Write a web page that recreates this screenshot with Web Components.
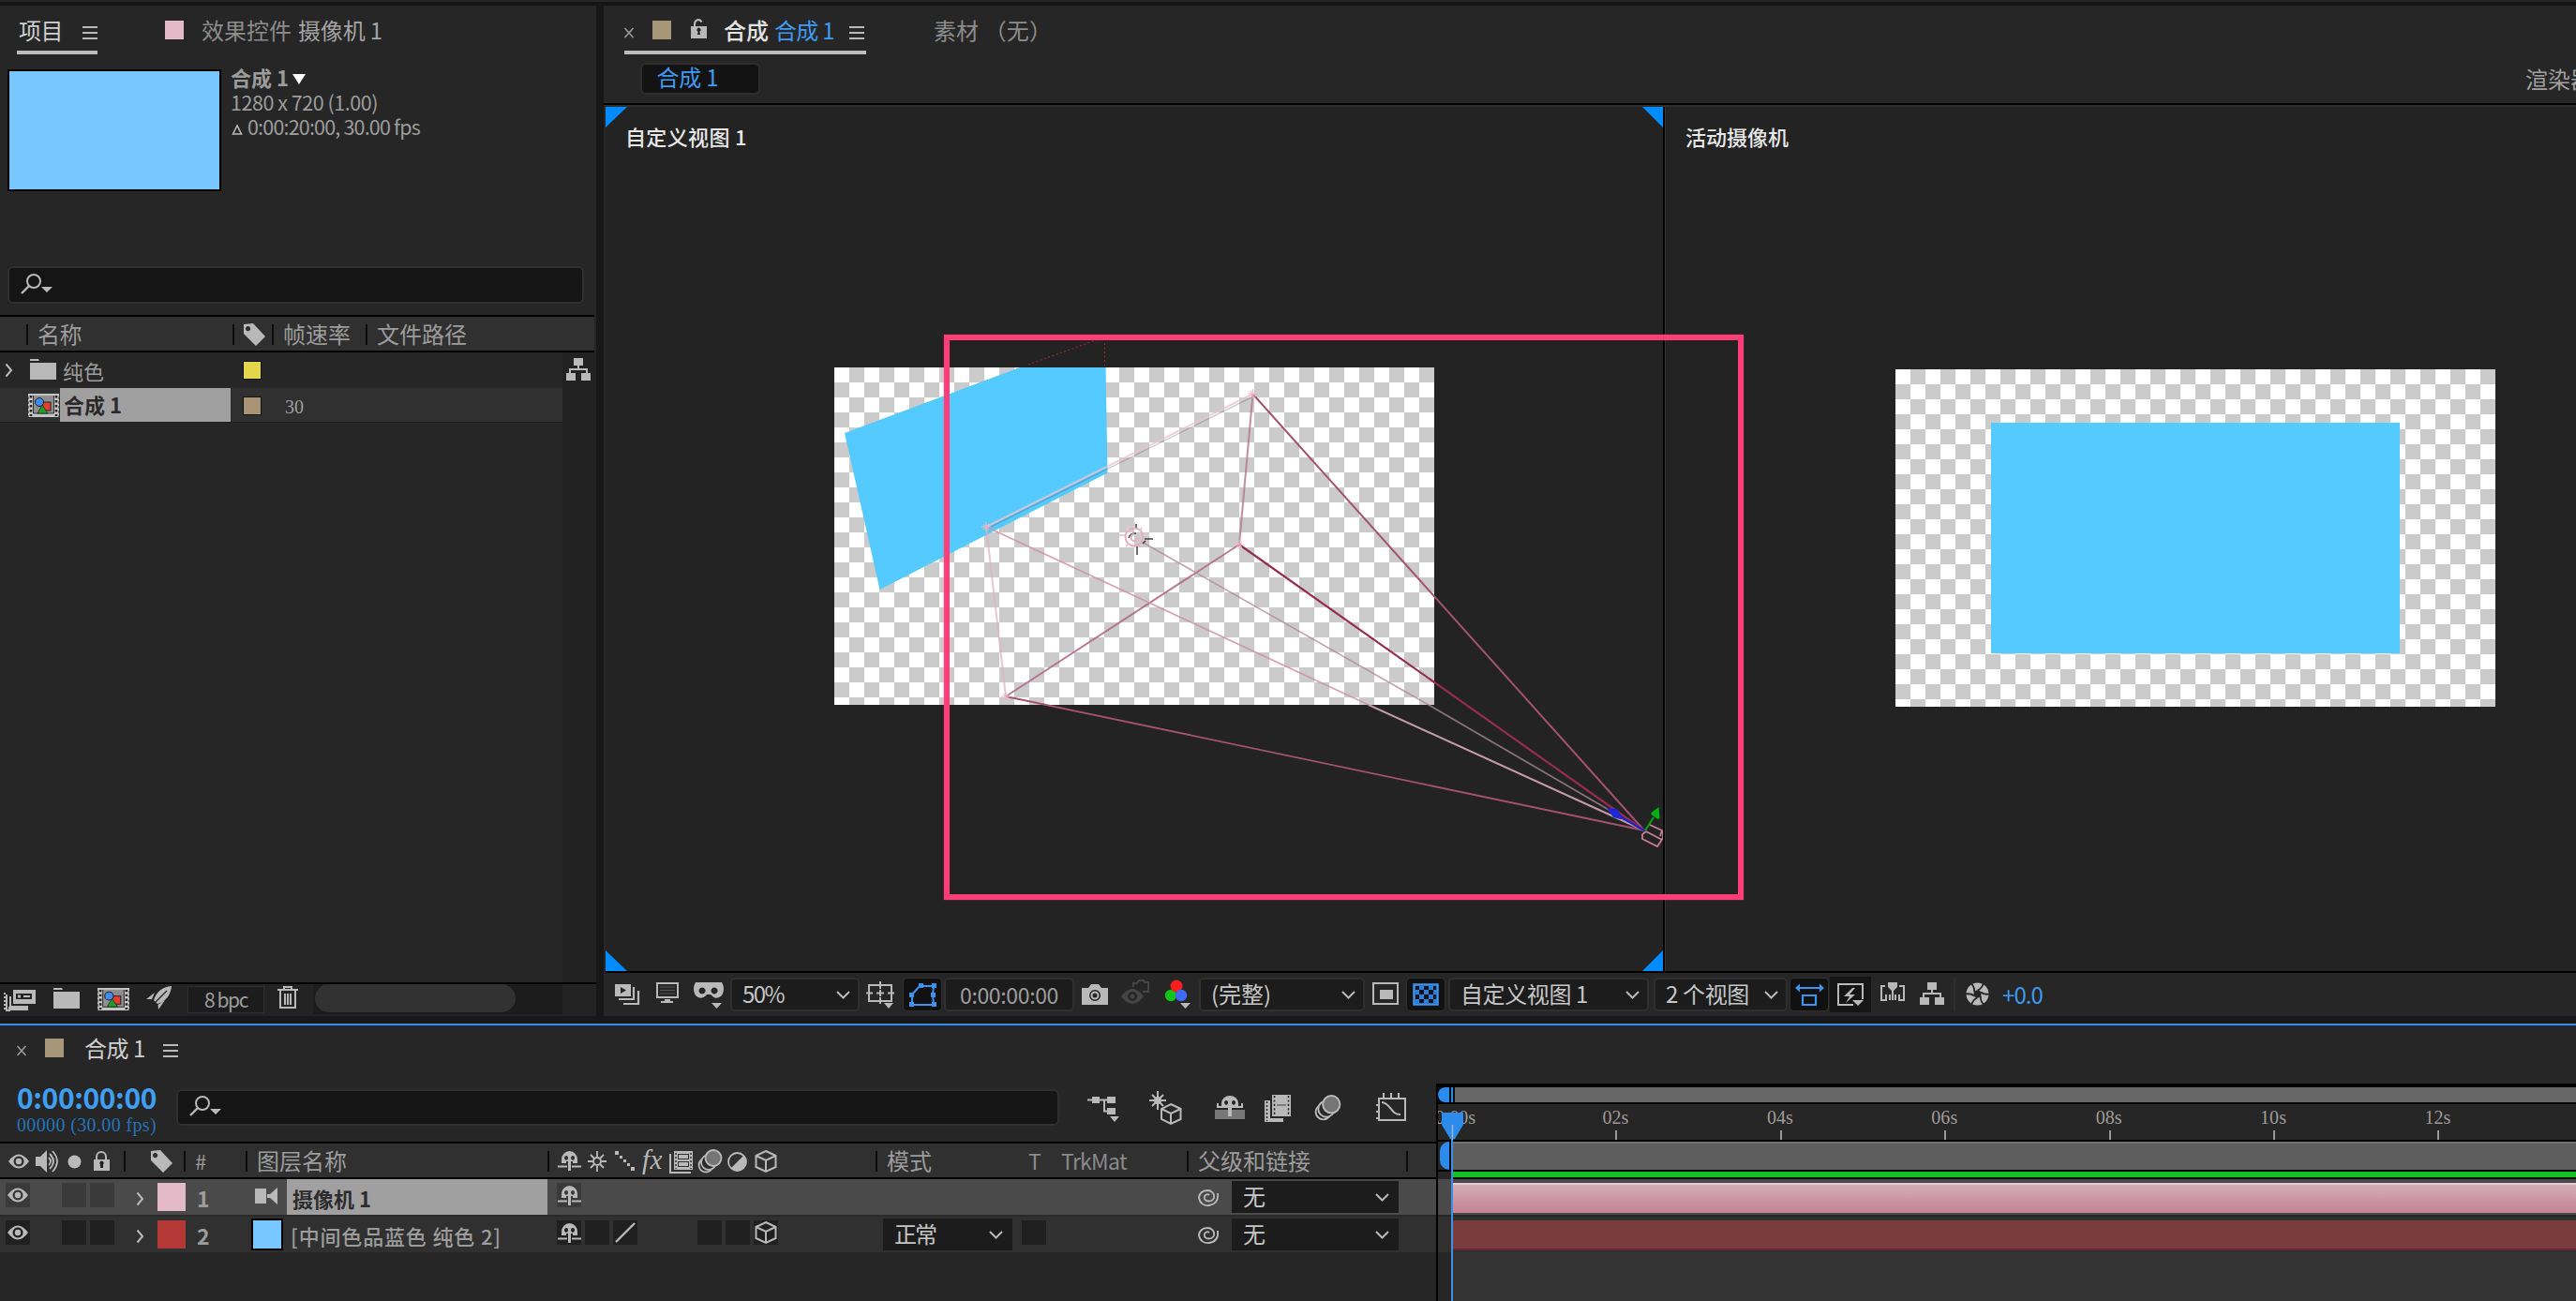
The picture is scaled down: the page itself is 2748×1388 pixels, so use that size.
<!DOCTYPE html>
<html lang="zh-CN">
<head>
<meta charset="utf-8">
<title>合成 1</title>
<style>
html,body{margin:0;padding:0;background:#262626}
body{width:2748px;height:1388px;overflow:hidden;font-family:"Noto Sans CJK SC","Noto Sans",sans-serif;color:#9c9c9c}
</style>
</head>
<body>
<ae-app></ae-app>
<script>
const ICONS = {
  menu: [16,14,'<path d="M0 1h16M0 7h16M0 13h16" stroke="currentColor" stroke-width="2"/>'],
  close: [12,12,'<path d="M1.500 1l9 10M10.500 1l-9 10" stroke="#9a9a9a" stroke-width="1.600"/>'],
  unlock: [17,21,'<path d="M4 9V5.500a4 4.500 0 0 1 7.500-2" fill="none" stroke="currentColor" stroke-width="2"/><path d="M0 8h17v13H0z" fill="currentColor"/><path d="M7 17l.6-3.500a2 2 0 1 1 1.800 0L10 17z" fill="#222"/>'],
  lock: [18,22,'<path d="M4 10V6a5 5 0 0 1 10 0v4" fill="none" stroke="currentColor" stroke-width="2"/><path d="M1 9h17v12H1z" fill="currentColor"/><path d="M8 18v-3.500a2.200 2.200 0 1 1 3 0V18z" fill="#222"/>'],
  search: [34,22,'<circle cx="14" cy="8" r="7" fill="none" stroke="currentColor" stroke-width="2"/><path d="M9 13l-8 8" stroke="currentColor" stroke-width="2.400"/><path d="M22 14h12l-6 6z" fill="currentColor"/>'],
  tag: [24,24,'<path fill-rule="evenodd" d="M1 1l10-1 13 14-10 10L1 11zM5.500 3a2.600 2.600 0 1 0 .1 0z" fill="currentColor"/>'],
  folder: [28,22,'<path d="M0 0h9l1 2H0zM0 4h28v18H0z" fill="currentColor"/>'],
  flow: [26,24,'<path d="M8 0h10v8H8zM0 16h10v8H0zM16 16h10v8H16z" fill="currentColor"/><path d="M13 8v5M4 17v-5h18v5" fill="none" stroke="currentColor" stroke-width="2"/>'],
  arrow: [9,16,'<path d="M1.500 1.500L7 8l-5.500 6.500" fill="none" stroke="currentColor" stroke-width="2"/>'],
  chev: [15,9,'<path d="M1 1l6.500 6.500L14 1" fill="none" stroke="currentColor" stroke-width="2"/>'],
  comp: [33,25,'<path d="M0 0h33v25H0z" fill="#c4c4c4"/><path d="M5 2h23v19H5z" fill="#8f8f8f"/><path d="M5.500 2v19h22V2" fill="none" stroke="#333" stroke-width="1"/><path d="M3 2v22M30 2v22" stroke="#222" stroke-width="2.500" stroke-dasharray="2.500 2.500"/><path d="M0 3v22M33 3v22" stroke="#262626" stroke-dasharray="3 2"/><rect x="15" y="9" width="9" height="9" fill="#e83b32" stroke="#222"/><circle cx="12" cy="9" r="4.500" fill="#3d8df0" stroke="#222"/><path d="M10 21l5-9 6 9z" fill="#1fa028" stroke="#222" stroke-width=".8"/>'],
  footage: [34,25,'<path fill-rule="evenodd" d="M10 1h24v15H10zM13 5v6h17V5z" fill="currentColor"/><path d="M15 6.500h3v3h-3zM21 7h7v2h-7z" fill="currentColor"/><path d="M3 6v17h3v-3h20M1 4v20" fill="none" stroke="currentColor" stroke-width="2"/><path d="M6 8h2v10h18v5H6z" fill="currentColor"/><path d="M1 6v19M9 24h17" stroke="#232323" stroke-width="2" stroke-dasharray="2 2"/>'],
  rocket: [27,25,'<path d="M27 0C17 1 11 6 8 15l4 4C21 16 26 10 27 0zM9 7L0 14h6zM20 15l-7 10-.5-5z" fill="currentColor"/><path d="M10 17L22 5" stroke="#222" stroke-width="1.200"/>'],
  trash: [22,24,'<path d="M0 4h22M7 4V1h8v3M3 5v18h16V5M8 8v12M11 8v12M14 8v12" fill="none" stroke="currentColor" stroke-width="2"/>'],
  eye: [22,16,'<path fill-rule="evenodd" d="M0 8Q11-7 22 8 11 23 0 8zM11 2.500a5.500 5.500 0 1 0 .1 0z" fill="currentColor"/><circle cx="11" cy="8" r="3.200" fill="currentColor"/>'],
  speaker: [25,24,'<path d="M0 7h5l7-7v24l-7-7H0z" fill="currentColor"/><path d="M14 8q4 4 0 8M15 4q8 8 0 16M18 1q10 11 0 22" fill="none" stroke="currentColor" stroke-width="1.800"/>'],
  dot: [15,15,'<circle cx="7.500" cy="7.500" r="7" fill="currentColor"/>'],
  shy: [25,21,'<path fill-rule="evenodd" d="M4 13V9a8.500 9 0 0 1 17 0v4h-5v-2h-2v10h-3V11H9v2zM9 5a2 2.400 0 1 0 .1 0zM16 5a2 2.400 0 1 0 .1 0z" fill="currentColor"/><path d="M0 16.500h10M15 16.500h10" stroke="currentColor" stroke-width="2"/>'],
  sun: [20,22,'<circle cx="10" cy="11" r="4" fill="none" stroke="currentColor" stroke-width="2"/><path d="M10 0v6M10 16v6M0 11h5M15 11h5M3 4l4 4M13 14l4 4M17 4l-4 4M7 14l-4 4" stroke="currentColor" stroke-width="1.800"/>'],
  steps: [22,21,'<path d="M0 0h4v4H0zM5 5h3v3H5zM9 9h3v3H9zM13 13h3v3h-3zM17 17h4v4h-4z" fill="currentColor"/>'],
  film: [25,24,'<path fill-rule="evenodd" d="M5 0h20v20H5zM9 3v6h12V3zM9 11v6h12v-6z" fill="currentColor"/><path d="M10 4h10v4H10zM10 12h10v4H10z" fill="currentColor"/><path d="M7 2v17M23 2v17" stroke="#2a2a2a" stroke-width="1.400" stroke-dasharray="2 2"/><path d="M1 3v20h22" fill="none" stroke="currentColor" stroke-width="2"/>'],
  mblur: [27,26,'<circle cx="9" cy="17" r="7.500" fill="none" stroke="currentColor" stroke-width="1.800"/><circle cx="12" cy="14" r="8" fill="#2a2a2a" stroke="currentColor" stroke-width="1.800"/><circle cx="17" cy="9.500" r="8.500" fill="#757575" stroke="currentColor" stroke-width="1.800"/>'],
  half: [21,21,'<circle cx="10.500" cy="10.500" r="9.500" fill="none" stroke="currentColor" stroke-width="1.800"/><path d="M17.500 3.500A9.900 9.900 0 0 1 3.500 17.500z" fill="currentColor"/>'],
  cube: [24,24,'<path d="M12 1l10.500 5v12L12 23 1.500 18V6zM1.500 6L12 11l10.500-5M12 11v12" fill="none" stroke="currentColor" stroke-width="2"/>'],
  slash: [24,24,'<path d="M2 22L22 2" stroke="currentColor" stroke-width="2.400"/>'],
  cam: [24,18,'<path d="M0 1h12v16H0zM12 7h4l8-7v18l-8-7h-4z" fill="currentColor"/><path d="M12.500 1v16" stroke="#4a4a4a"/>'],
  spiral: [24,22,'<path d="M13 9c-2-2-6 0-5 4 1 3 8 4 10-1 1-5-3-8-7-8-6 0-9 4-9 8 1 6 6 9 11 8 6-1 10-5 9-13" fill="none" stroke="currentColor" stroke-width="1.800"/>'],
  play: [27,22,'<path fill-rule="evenodd" d="M0 0h17v13H0zM6 3v7l6-3.500z" fill="currentColor"/><path d="M20 3v13H4M25 7v14H9" fill="none" stroke="currentColor" stroke-width="2.200"/>'],
  monitor: [24,22,'<path d="M1 1h22v15H1z" fill="none" stroke="currentColor" stroke-width="2"/><path d="M4 5h16M4 8.500h16M4 12h16" stroke="#555"/><path d="M9 18h6v2h3v2H5v-2h4z" fill="currentColor"/>'],
  goggles: [32,28,'<path fill-rule="evenodd" d="M2 0h28q4 7 0 14-6 6-12-1h-4Q8 20 2 14-2 7 2 0zM9 5.500a3.500 3.500 0 1 0 .1 0zM22 5.500a3.500 3.500 0 1 0 .1 0z" fill="currentColor"/><path d="M19 22h11l-5.500 6z" fill="currentColor"/>'],
  grid: [30,30,'<path d="M3 4h24v17H3z" fill="none" stroke="currentColor" stroke-width="2"/><path d="M15 0v8M15 17v7M0 12.500h7M23 12.500h7M11 12.500h8M15 9v7" stroke="currentColor" stroke-width="2"/><path d="M19 23h10l-5 6z" fill="currentColor"/>'],
  mask: [29,25,'<path d="M3 23V12L11 3h15l-1 9 1 11z" fill="none" stroke="#3d94f0" stroke-width="2"/><path d="M0 20h5v5H0zM0 10h5v5H0zM10 0h5v5h-5zM24 0h5v5h-5zM23 10h5v5h-5zM24 20h5v5h-5z" fill="#3d94f0"/>'],
  camera: [28,22,'<path fill-rule="evenodd" d="M0 4h7l3-4h8l3 4h7v18H0zM14 6a6 6 0 1 0 .1 0z" fill="currentColor"/><circle cx="14" cy="12" r="3.500" fill="none" stroke="currentColor" stroke-width="2"/>'],
  snap: [30,27,'<g color="#454545"><path fill-rule="evenodd" d="M0 18Q12 2 24 18 12 34 0 18zM12 13a5 5 0 1 0 .1 0z" fill="currentColor"/><circle cx="12" cy="18" r="2.500" fill="currentColor"/><path d="M13 8V4h4l2-3h5l1 2h4v10h-6" fill="none" stroke="currentColor" stroke-width="2"/></g>'],
  rgb: [27,31,'<circle cx="6" cy="17" r="6.200" fill="#14c41c"/><circle cx="12" cy="7" r="6.500" fill="#fa1e1e"/><circle cx="17" cy="17" r="6.200" fill="#3f6cf5"/><path d="M16 25h11l-5.500 6z" fill="currentColor"/>'],
  region: [28,24,'<path d="M1 1h26v22H1z" fill="none" stroke="currentColor" stroke-width="2"/><path d="M8 8h14v10H8z" fill="currentColor"/>'],
  alpha: [28,24,'<path d="M1.500 1.500h25v21h-25z" fill="#0b1420" stroke="#3d94f0" stroke-width="2.500"/><path d="M7 3h5v4H7zM17 3h5v4h-5zM3 7h4v5H3zM12 7h5v5h-5zM22 7h4v5h-4zM7 12h5v5H7zM17 12h5v5h-5zM3 17h4v4H3zM12 17h5v4h-5zM22 17h4v4h-4z" fill="#2f7fd6"/>'],
  fit: [31,24,'<path d="M4 5h23" stroke="#3d94f0" stroke-width="2"/><path d="M0 5l5-4.500v9zM31 5l-5-4.500v9z" fill="#3d94f0"/><path d="M8 13h14v10H8z" fill="none" stroke="#3d94f0" stroke-width="2.200"/>'],
  fast: [28,25,'<path d="M17 23H1V1h26v16" fill="none" stroke="currentColor" stroke-width="2"/><path d="M16 5L7 14h6l-4 7 10-9h-6l6-7zM16 18h12l-6 6z" fill="currentColor"/>'],
  tl: [26,21,'<path d="M5 4H1v15h5v-6M20 4h5v15h-5v-6M10 19v-6M16 19v-6" fill="none" stroke="currentColor" stroke-width="2"/><path d="M8 0h10v5l-4 4v10h-2V9L8 5z" fill="currentColor"/>'],
  aperture: [25,25,'<circle cx="12.500" cy="12.500" r="12" fill="currentColor"/><g fill="none" stroke="#262626" stroke-width="1.800"><path id="b" d="M12.500 8.500Q17 7 19 1"/><path d="M12.500 8.500Q17 7 19 1" transform="rotate(60 12.500 12.500)"/><path d="M12.500 8.500Q17 7 19 1" transform="rotate(120 12.500 12.500)"/><path d="M12.500 8.500Q17 7 19 1" transform="rotate(180 12.500 12.500)"/><path d="M12.500 8.500Q17 7 19 1" transform="rotate(240 12.500 12.500)"/><path d="M12.500 8.500Q17 7 19 1" transform="rotate(300 12.500 12.500)"/></g><circle cx="12.500" cy="12.500" r="4" fill="#262626"/>'],
  miniflow: [34,27,'<path d="M5 0h8v7H5zM21 0h9v7h-9zM21 12h9v7h-9zM24 21h10l-5 6z" fill="currentColor"/><path d="M0 3.500h23M18 3.500v12h4" fill="none" stroke="currentColor" stroke-width="2"/>'],
  draft: [35,36,'<path d="M9 0v20M0 10h18M3 4l12 12M15 4L3 16" stroke="currentColor" stroke-width="2"/><circle cx="9" cy="10" r="4" fill="currentColor"/><path d="M23 14l10.500 5v11L23 35l-10-5V19zM13 19l10 5 10.500-5M23 24v11" fill="#262626" stroke="currentColor" stroke-width="2"/>'],
  shybig: [32,26,'<path d="M0 15h32v10H0z" fill="#777"/><path fill-rule="evenodd" d="M7 11V8a9 8 0 0 1 18 0v3h5v2h-12v9h-4v-9H2v-2zM12 5a2 2.400 0 1 0 .1 0zM20 5a2 2.400 0 1 0 .1 0z" fill="currentColor"/><path d="M3 8v4M29 8v4" stroke="currentColor" stroke-width="2"/>'],
  filmbig: [30,29,'<path d="M8 0h20v23H8z" fill="currentColor"/><path d="M10.500 1v21M25.500 1v21" stroke="#2a2a2a" stroke-width="1.600" stroke-dasharray="2.200 2.200"/><path d="M13 11h10" stroke="#555" stroke-width="1.200"/><path d="M0 6h6v19h14v4H0z" fill="currentColor"/><path d="M2.500 7v21" stroke="#2a2a2a" stroke-width="1.500" stroke-dasharray="2 2"/>'],
  graph: [32,31,'<path d="M3 6h28v23H3z" fill="none" stroke="currentColor" stroke-width="2"/><path d="M8 0v6M16 0v6M24 0v6M0 13h3M0 20h3M0 27h3" stroke="currentColor" stroke-width="2"/><path d="M6 10c10 1 9 13 20 13" fill="none" stroke="currentColor" stroke-width="2"/>'],
  tri: [14,11,'<path d="M0 0h14L7 11z" fill="#fff"/>'],
  delta: [12,12,'<path d="M1.500 11L6 2l4.500 9z" fill="none" stroke="currentColor" stroke-width="1.600"/>'],
  head: [23,29,'<path d="M0 0h23v13l-9 15h-5L0 13z" fill="#2d8ceb"/><path d="M11.500 13v16" stroke="#9db4cc" stroke-width="1.500"/>'],
};

class AeIcon extends HTMLElement {
  connectedCallback() {
    const [w, h, body] = ICONS[this.getAttribute('name')];
    const W = this.getAttribute('w') || w, H = this.getAttribute('h') || h;
    this.attachShadow({mode:'open'}).innerHTML =
      `<style>:host{display:block;color:#b9b9b9;flex:none}svg{display:block;overflow:visible}</style>
       <svg width="${W}" height="${H}" viewBox="0 0 ${w} ${h}" preserveAspectRatio="none">${body}</svg>`;
  }
}
customElements.define('ae-icon', AeIcon);

/* One line of text; "fit" spreads its letters over a given width. */
class AeText extends HTMLElement {
  connectedCallback() {
    const a = n => this.getAttribute(n);
    const fam = a('serif') !== null ? '"Liberation Serif",serif' : '"Noto Sans CJK SC","Noto Sans",sans-serif';
    const lh = a('lh') || 30;
    this.attachShadow({mode:'open'}).innerHTML =
      `<style>:host{display:block;height:${lh}px;flex:none}
       span{display:inline-block;white-space:pre;font:${a('italic')!==null?'italic ':''}${a('weight')||400} ${a('size')||24}px/${lh}px ${fam};color:${a('color')||'#9c9c9c'}}</style><span><slot></slot></span>`;
    const fit = parseFloat(a('fit'));
    if (fit) {
      const s = this.shadowRoot.querySelector('span');
      const w = s.getBoundingClientRect().width, n = this.textContent.length;
      if (w) s.style.letterSpacing = ((fit - w) / n).toFixed(3) + 'px';
    }
  }
}
customElements.define('ae-text', AeText);

class AeBox extends HTMLElement {
  connectedCallback() {
    this.attachShadow({mode:'open'}).innerHTML =
      `<style>:host{display:flex;align-items:center;justify-content:center;box-sizing:border-box;width:100%;height:100%;
       background:${this.getAttribute('bg')||'#202020'};border:${this.getAttribute('border')||'0'};border-radius:${this.getAttribute('r')||0}px}</style><slot></slot>`;
  }
}
customElements.define('ae-box', AeBox);

class AeSelect extends HTMLElement {
  connectedCallback() {
    this.attachShadow({mode:'open'}).innerHTML =
      `<style>:host{display:flex;align-items:center;justify-content:space-between;box-sizing:border-box;width:100%;height:100%;
       padding:0 8px 0 ${this.getAttribute('pad')||10}px;background:#1c1c1c;border:2px solid #2f2f2f;border-radius:${this.getAttribute('r')||5}px}
       ::slotted(*){margin-top:-2px}
       :host([flat]){border-color:#1c1c1c;border-radius:0}</style><slot></slot><ae-icon name="chev"></ae-icon>`;
  }
}
customElements.define('ae-select', AeSelect);

/* Flex strip: each item carries its gap from the one before it. */
const strip = (x0, y0, items) => {
  let end = x0;
  return items.map(([x, y, w, h, html]) => {
    const s = `<div style="flex:none;margin:${y-y0}px 0 0 ${x-end}px;width:${w}px;height:${h}px">${html}</div>`;
    end = x + w;
    return s;
  }).join('');
};
const ic = (name, x, y, w, h, color) => [x, y, w||ICONS[name][0], h||ICONS[name][1], `<ae-icon name="${name}" w="${w||ICONS[name][0]}" h="${h||ICONS[name][1]}"${color?` style="color:${color}"`:''}></ae-icon>`];
const tx = (text, x, cy, w, o={}) => [x, cy - 15 - (o.serif ? 0 : 2), w, 30, txt(text, w, o)];
const txt = (text, w, o={}) => `<ae-text fit="${w}" size="${o.size||24}" color="${o.color||'#9c9c9c'}" weight="${o.weight||400}" lh="${o.lh||30}"${o.serif?' serif':''}>${text}</ae-text>`;
const fill = (x, y, w, h, bg, extra='') => [x, y, w, h, `<div style="box-sizing:border-box;width:100%;height:100%;background:${bg};${extra}"></div>`];
const box = (x, y, w, h, bg, inner='', r=0, border='0') => [x, y, w, h, `<ae-box bg="${bg}" r="${r}" border="${border}">${inner}</ae-box>`];
const icon = n => `<ae-icon name="${n}"></ae-icon>`;
const sel = (x, y, w, h, label, lw, flat, pad) => [x, y, w, h, `<ae-select ${flat?'flat':''} pad="${pad||10}">${txt(label, lw, {color:'#c6c6c6'})}</ae-select>`];
const sep = (x, y, h=22) => fill(x, y, 2, h, '#0c0c0c');
const BASE = `.s{display:flex;align-items:flex-start;flex:none}`;

class AeProject extends HTMLElement {
  connectedCallback() {
    this.attachShadow({mode:'open'}).innerHTML = `<style>${BASE}
      :host{display:flex;flex-direction:column;width:636px;height:1078px;background:#262626;flex:none}
      .info{display:flex;flex-direction:column;height:90px}
      .hd{background:#303030;border-top:2px solid #000;border-bottom:2px solid #000;width:634px}
      .body{display:flex;flex:none;height:672px}.rows{width:600px;background:#262626}.side{flex:1;background:#222}
      .r2{background:#303030;border-bottom:1px solid #1e1e1e}
      </style>
      <div class="s" style="height:66px">${strip(0,6,[
        tx('项目',20,34,47,{color:'#d0d0d0'}), ic('menu',88,28),
        fill(176,22,20,20,'#e4bac8'),
        tx('效果控件',215,34,96,{color:'#8c8c8c'}), tx('摄像机 1',318,34,90,{color:'#a4a4a4'})])}</div>
      <div style="flex:none;width:86px;height:4px;margin:-18px 0 14px 18px;background:#bdbdbd"></div>
      <div class="s" style="height:210px">${strip(0,72,[
        fill(8,74,228,130,'#78c8ff','border:2px solid #000'),
        [246,68,220,90,`<div class="info">
          <div class="s" style="height:28px">${strip(246,68,[tx('合成 1',246,84,62,{size:22,weight:700}),ic('tri',312,79)])}</div>
          <div class="s" style="height:26px">${strip(246,96,[tx('1280 x 720 (1.00)',246,111,157,{size:21.5})])}</div>
          <div class="s" style="height:30px">${strip(246,122,[ic('delta',247,132),tx('0:00:20:00, 30.00 fps',264,137,184,{size:21.5})])}</div></div>`]])}</div>
      <div class="s" style="height:54px">${strip(0,282,[
        [8,284,615,40,`<ae-box bg="#151515" r="6" border="2px solid #2f2f2f"><div style="width:100%;padding-left:12px;margin-top:-2px">${icon('search')}</div></ae-box>`]])}</div>
      <div class="s hd" style="height:36px">${strip(0,338,[sep(28,346),tx('名称',40,358,47),sep(248,346),ic('tag',259,345),sep(290,346),tx('帧速率',302,358,72),sep(390,346),tx('文件路径',402,358,96)])}</div>
      <div class="body"><div class="rows">
        <div class="s" style="height:38px">${strip(0,376,[ic('arrow',5,387),ic('folder',32,383),tx('纯色',67,396.500,44,{size:22}),fill(259,385,20,20,'#e4d64c','border:1px solid #111')])}</div>
        <div class="s r2" style="height:36px">${strip(0,414,[ic('comp',30,420),
          [64,414,182,36,`<ae-box bg="#a0a0a0"><div style="width:174px;margin-top:-2px">${txt('合成 1',62,{size:22,weight:700,color:'#2a2a2a'})}</div></ae-box>`],
          fill(259,423,20,20,'#a89474','border:1px solid #111'),tx('30',304,434,20,{size:20,serif:1,color:'#a0a0a0'})])}</div>
      </div><div class="side"><div class="s" style="height:40px">${strip(600,376,[ic('flow',604,382)])}</div></div></div>
      <div class="s" style="height:34px;border-top:2px solid #000;background:#232323">${strip(0,1050,[
        ic('footage',4,1055),ic('folder',57,1054),ic('comp',104,1054,34,24),ic('rocket',156,1052),
        box(200,1052,82,29,'#1c1c1c',`<div style="margin-top:-1px">${txt('8 bpc',46,{size:21})}</div>`,0,'1px solid #2e2e2e'),
        ic('trash',296,1052),[334,1050,266,32,`<div style="height:32px;background:#1c1c1c;display:flex"><div style="width:214px;height:30px;margin-left:2px;border-radius:15px;background:#323232"></div></div>`]])}</div>`;
  }
}
customElements.define('ae-project', AeProject);

class AeViewport extends HTMLElement {
  connectedCallback() {
    this.attachShadow({mode:'open'}).innerHTML = `<style>
      :host{display:grid;background:#232323;height:922px;overflow:hidden;flex:none;box-sizing:border-box}
      ::slotted(*),.l{grid-area:1/1}.l{padding:16px 0 0 21px;z-index:1}</style>
      <slot></slot><div class="l">${txt(this.getAttribute('label'),+this.getAttribute('lw'),{size:22,weight:500,color:'#e8e8e8'})}</div>`;
  }
}
customElements.define('ae-viewport', AeViewport);

const CHECK = id => `<pattern id="${id}" width="32" height="32" patternUnits="userSpaceOnUse"><rect width="32" height="32" fill="#fff"/><path d="M16 0h16v16H16zM0 16h16v16H0z" fill="#cbcbcb"/></pattern>`;
const ln = (x1,y1,x2,y2,c,w=1.8,o=1) => `<line x1="${x1}" y1="${y1}" x2="${x2}" y2="${y2}" stroke="${c}" stroke-width="${w}" stroke-opacity="${o}"/>`;
const P = [1754,886];
const star = (x,y) => `<path d="M${x-5} ${y}h10M${x} ${y-5}v10M${x-3} ${y-3}l6 6M${x+3} ${y-3}l-6 6" stroke="#e9b9c8" stroke-opacity=".75" stroke-width="1.400"/>`;

class AeViewer extends HTMLElement {
  connectedCallback() {
    const y = 1038, T = 1044;
    this.attachShadow({mode:'open'}).innerHTML = `<style>${BASE}
      :host{display:flex;flex-direction:column;width:2104px;height:1078px;background:#262626;flex:none;position:relative;overflow:hidden}
      .views{display:flex;margin-left:2px;border-top:2px solid #2e2e2e;border-bottom:2px solid #000;background:#232323;flex:none}
      .frame{position:absolute;left:363px;top:351px;width:853px;height:603px;box-sizing:border-box;border:6.5px solid #ff3d78;box-shadow:0 0 1.500px #ff3d7888}
      </style>
      <div class="s" style="height:48px">${strip(644,6,[
        ic('close',665,29),fill(696,22,20,20,'#a89678'),ic('unlock',737,19.500),
        tx('合成',772,34,48,{color:'#e2e2e2',weight:500}),tx('合成 1',826,34,64,{color:'#3f9af0'}),ic('menu',906,28),
        tx('素材 （无）',996,34,126,{color:'#8c8c8c'})])}</div>
      <div style="flex:none;width:258px;height:4px;margin-left:22px;background:#bdbdbd"></div>
      <div class="s" style="height:52px;border-bottom:2px solid #000">${strip(644,58,[
        box(683,67,128,34,'#131313',`<div style="width:93px;margin-top:-5px">${txt('合成 1',66,{color:'#3f9af0'})}</div>`,6,'2px solid #2d2d2d'),
        tx('渲染器：',2694,86,96,{color:'#a0a0a0'})])}</div>
      <div class="views">
        <ae-viewport label="自定义视图 1" lw="130" style="width:1128px">
          <svg width="1128" height="922" viewBox="646 114 1128 922" style="display:block">
            <defs>${CHECK('c1')}<clipPath id="k"><rect width="640" height="360"/></clipPath></defs>
            <g transform="translate(890 392)" clip-path="url(#k)"><rect width="640" height="360" fill="url(#c1)"/>
              <path d="M11 70L198 0 289-34 291.500 112.500 48.500 237z" fill="#55caff"/></g>
            <path d="M1097 389L1180 359M1178.500 366V392" stroke="#a02a30" stroke-width="1.200" stroke-dasharray="2 2.500" fill="none" stroke-opacity=".9"/>
            ${ln(1337,423,1053,564,'#555',1.500,.28)}
            ${ln(1337,420,1052,562,'#ecc3cf',2,.8)}${ln(1052,562,1073,743,'#ddb3c0',2,.75)}
            ${ln(1073,743,1322,581,'#b06c86',2,.9)}${ln(1322,581,1336.5,420,'#b77a90',2,.85)}
            ${ln(1337,421,...P,'#a4536f',2)}${ln(1322,581,...P,'#962c50',2.2)}
            ${ln(1052,562,1460,752,'#cf93a8',1.800,.85)}${ln(1460,752,...P,'#cfa0b0',2,.95)}
            ${ln(1218,578,1524,752,'#b58a9b',1.600,.8)}${ln(1524,752,...P,'#97808a',1.800,.85)}
            ${ln(1073,743,...P,'#a4536f',1.900)}
            ${star(1052,562)}${star(1336.5,420)}${star(1073,743)}${star(1322,581)}
            <g fill="none"><path d="M1212 559v5M1221 575h9M1213 583v9M1219 580l3-3" stroke="#3a4545" stroke-width="1.500"/>
            <path d="M1204 574a7 7 0 0 1 8-5" stroke="#444" stroke-width="1.500"/>
            <circle cx="1210" cy="573" r="9.500" stroke="#e5aebe" stroke-width="2"/><path d="M1210 570a3.500 3.500 0 1 0 3.500 4" stroke="#e5aebe" stroke-width="1.800"/><path d="M1210 557v6M1194 571h6M1220 571h6M1202 563l2 3M1218 563l-2 3M1201 583l3-3" stroke="#f0c8d3" stroke-width="2"/></g>
            <path d="M1754 886L1728 871" stroke="#2020c8" stroke-width="2.400"/><path d="M1714 862l11 1 5 8-1 3-8-2z" fill="#1c28d8"/>
            <path d="M1755 886l9-14" stroke="#00a010" stroke-width="2.200"/><path d="M1769.500 861l1 12-2 1-7-5 0-2z" fill="#00b012"/>
            <path d="M1760 880l13 6-2 6M1756 887l17 9M1752 890v5l16 8 6-9v-7M1752 890l4-3" fill="none" stroke="#c77f95" stroke-width="1.800"/>
            <path d="M646 114h23l-23 22zM1774 114h-22l22 22zM646 1036h23l-23-22zM1774 1036h-22l22-22z" fill="#008cff"/>
          </svg>
        </ae-viewport>
        <div style="width:3px;background:#000;border-right:1px solid #353535;box-sizing:border-box;flex:none"></div>
        <ae-viewport label="活动摄像机" lw="110" style="width:971px">
          <svg width="971" height="922" viewBox="1777 114 971 922" style="display:block"><defs>${CHECK('c2')}</defs>
            <g transform="translate(2022 394)"><rect width="640" height="360" fill="url(#c2)"/><rect x="102" y="57" width="436" height="246" fill="#55caff"/></g></svg>
        </ae-viewport>
      </div>
      <div class="s" style="height:46px">${strip(644,y,[
        ic('play',656,1050),ic('monitor',700,1048),ic('goggles',740,1048),
        sel(779,T-1,138,36,'50%',44,0,11),ic('grid',924,1047),
        box(963,T-1,42,36,'#111',icon('mask'),5,'1px solid #2f2f2f'),
        box(1007,T-1,139,36,'#1c1c1c',`<div style="margin-top:-1px">${txt('0:00:00:00',105,{size:23})}</div>`,5,'2px solid #2f2f2f'),
        ic('camera',1154,1050),ic('snap',1196,1045),ic('rgb',1243,1045),
        sel(1279,T-1,177,36,'(完整)',64,0,11),ic('region',1464,1048),
        box(1500,T-1,42,36,'#111',icon('alpha'),5,'1px solid #2f2f2f'),
        sel(1545,T-1,214,36,'自定义视图 1',136,0,11),sel(1764,T-1,143,36,'2 个视图',89,0,11),
        box(1909,T-1,42,36,'#111',icon('fit'),5,'1px solid #2f2f2f'),
        box(1952,1042,44,38,'#151515',icon('fast')),ic('tl',2006,1048),ic('flow',2048,1048),
        fill(2084,1043,2,36,'#2e2e2e'),ic('aperture',2097,1048),
        tx('+0.0',2136,1062.500,43,{size:24,color:'#3f9af0'})])}</div>
      <div class="frame"></div>`;
  }
}
customElements.define('ae-viewer', AeViewer);

class AeTracks extends HTMLElement {
  connectedCallback() {
    const lab = ['02s','04s','06s','08s','10s','12s'];
    this.attachShadow({mode:'open'}).innerHTML = `<style>
      :host{display:flex;flex-direction:column;width:1216px;height:232px;box-sizing:border-box;border-left:2px solid #000;position:relative;overflow:hidden;background:#262626;flex:none}
      .nav{display:flex;height:16px;background:#0e0e0e;border:solid #000;border-width:4px 0 2px;flex:none}
      .h{background:#2d8ceb;border-radius:10px 0 0 10px;width:12px}
      .ruler{display:flex;height:38px;border-bottom:2px solid #000;flex:none}
      .z{width:105.800px;margin-left:-3px;margin-top:-1px;flex:none}
      .m{width:175.400px;flex:none;display:flex;flex-direction:column;align-items:center}
      .m ae-text{margin:-1px 2px 0 0}
      .t{width:2px;height:10px;background:#999;margin-top:-1px}
      .work{display:flex;height:30px;border-bottom:2px solid #000;flex:none}
      .row{display:flex;height:40px;flex:none;box-sizing:border-box}
      .ph{position:absolute;left:14px;top:59px;width:2px;height:173px;background:#3f8fe8}
      .head{position:absolute;left:3.500px;top:31px}
      </style>
      <div class="nav"><div class="h"></div><div style="width:2px;margin:0 2px 0 2px;background:#2d8ceb"></div><div style="flex:1;background:#666"></div></div>
      <div class="ruler"><div class="z"><ae-text serif size="20" fit="43">0:00s</ae-text></div>
        ${lab.map(l=>`<div class="m"><ae-text serif size="20" fit="28" color="#a09a9a">${l}</ae-text><div class="t"></div></div>`).join('')}</div>
      <div class="work"><div class="h" style="width:10px;margin-left:2px"></div><div style="width:4px;background:#111"></div><div style="flex:1;background:#5e5e5e;border-top:2px solid #727272;box-sizing:border-box"></div></div>
      <div style="flex:none;height:6px;margin-left:16px;background:#12c224;border-bottom:2px solid #0a0a0a"></div>
      <div class="row" style="background:#4a4a4a;border-bottom:2px solid #262626;padding-top:4px"><div style="margin-left:15px;flex:1;height:32px;box-sizing:border-box;border-top:2px solid #e6cad2;background:linear-gradient(#d4adb9,#c9909f 65%,#c2839a)"></div></div>
      <div class="row" style="height:38px;background:#30302e;padding-top:4px"><div style="margin-left:15px;flex:1;height:32px;box-sizing:border-box;border-bottom:2px solid #682838;background:#7a3c3d"></div></div>
      <div style="flex:1;margin-left:15px;background:#343434"></div>
      <div class="ph"></div><div class="head">${icon('head')}</div>`;
  }
}
customElements.define('ae-tracks', AeTracks);

class AeTimeline extends HTMLElement {
  connectedCallback() {
    const dark='#202020', d1='#3a3a3a';
    this.attachShadow({mode:'open'}).innerHTML = `<style>${BASE}
      :host{display:flex;flex-direction:column;width:2748px;height:304px;background:#262626;box-sizing:border-box;border-top:8px solid #18181a}
      .line{height:2px;background:#3f8ae0;border-bottom:1px solid #0e2c50;flex:none}
      .main{display:flex;flex:none}.left{width:1532px;flex:none}
      .hd{background:#303030;border-top:2px solid #000;border-bottom:2px solid #000}
      </style>
      <div class="line"></div>
      <div class="s" style="height:61px">${strip(0,1095,[ic('close',17,1115),fill(48,1108,20,20,'#a89678'),tx('合成 1',90,1120,65,{color:'#cfcfcf'}),ic('menu',174,1114)])}</div>
      <div class="main"><div class="left">
        <div class="s" style="height:62px">${strip(0,1156,[
          [18,1155,150,60,`<div style="height:30px">${txt('0:00:00:00',149,{size:30,weight:700,color:'#3f9ff2'})}</div><div style="height:30px">${txt('00000 (30.00 fps)',149,{size:20,serif:1,color:'#2574ba'})}</div>`],
          [188,1162,942,39,`<ae-box bg="#151515" r="6" border="2px solid #2f2f2f"><div style="width:100%;padding-left:12px;margin-top:-3px">${icon('search')}</div></ae-box>`],
          ic('miniflow',1160,1170),ic('draft',1226,1164),ic('shybig',1296,1169),ic('filmbig',1349,1168),ic('mblur',1402,1168,29,28),ic('graph',1468,1166)])}</div>
        <div class="s hd" style="height:36px">${strip(0,1220,[
          ic('eye',9,1231),ic('speaker',38,1227),ic('dot',72,1232),ic('lock',99,1228),sep(132,1228),ic('tag',160,1227),sep(196,1228),
          tx('#',208,1239.500,13,{size:22}),sep(262,1228),tx('图层名称',274,1239.500,96),sep(584,1228),
          ic('shy',595,1228),ic('sun',627,1228),ic('steps',656,1228),
          [685,1222,24,30,'<ae-text italic serif size="29" color="#b9b9b9" fit="22">fx</ae-text>'],
          ic('film',714,1228),ic('mblur',744,1226),ic('half',776,1229),ic('cube',805,1227),sep(934,1228),
          tx('模式',946,1239.500,48),tx('T',1097,1239.500,13,{size:23,color:'#8a8a8a'}),tx('TrkMat',1132,1239.500,70,{size:23,color:'#8a8a8a'}),sep(1266,1228),tx('父级和链接',1278,1239.500,120),sep(1500,1228)])}</div>
        <div class="s" style="height:38px;background:#4a4a4a;border-bottom:2px solid #2a2a2a">${strip(0,1258,[
          box(6,1262,26,26,d1,icon('eye')),fill(66,1262,26,26,d1),fill(96,1262,26,26,d1),ic('arrow',145,1271),fill(168,1262,30,30,'#e4bac8'),
          tx('1',210,1279.500,12,{size:23,weight:700}),ic('cam',272,1267),
          [306,1258,278,38,`<ae-box bg="#a0a0a0"><div style="width:266px;margin-top:2px">${txt('摄像机 1',84,{size:22,weight:700,color:'#2c2c2c'})}</div></ae-box>`],
          box(594,1262,26,26,d1,icon('shy')),ic('spiral',1277,1266),sel(1314,1260,178,34,'无',22,1,10)])}</div>
        <div class="s" style="height:38px;background:#303030">${strip(0,1298,[
          box(6,1302,26,26,dark,icon('eye')),fill(66,1302,26,26,dark),fill(96,1302,26,26,dark),ic('arrow',145,1311),fill(168,1302,30,30,'#b43835'),
          tx('2',210,1319.500,14,{size:23,weight:700}),fill(268,1300,34,34,'#78c8ff','border:2px solid #000'),
          tx('[中间色品蓝色 纯色 2]',310,1319.500,225,{size:22,weight:500}),
          box(594,1302,26,26,dark,icon('shy')),fill(624,1302,26,26,dark),box(654,1302,26,26,dark,icon('slash')),
          fill(744,1302,26,26,dark),fill(774,1302,26,26,dark),box(804,1302,26,26,dark,icon('cube')),
          sel(942,1300,138,34,'正常',44,1,10),fill(1090,1302,26,26,dark),ic('spiral',1277,1306),sel(1314,1300,178,34,'无',22,1,10)])}</div>
      </div><ae-tracks></ae-tracks></div>`;
  }
}
customElements.define('ae-timeline', AeTimeline);

class AeApp extends HTMLElement {
  connectedCallback() {
    this.attachShadow({mode:'open'}).innerHTML = `<style>
      :host{display:flex;flex-direction:column;width:2748px;height:1388px;overflow:hidden;background:#262626}
      .top{height:4px;border-top:2px solid #262626;background:#151515;flex:none}
      .up{display:flex;height:1078px;background:#171717;gap:8px;flex:none}</style>
      <div class="top"></div>
      <div class="up"><ae-project></ae-project><ae-viewer></ae-viewer></div>
      <ae-timeline></ae-timeline>`;
  }
}
customElements.define('ae-app', AeApp);
</script>
</body>
</html>
